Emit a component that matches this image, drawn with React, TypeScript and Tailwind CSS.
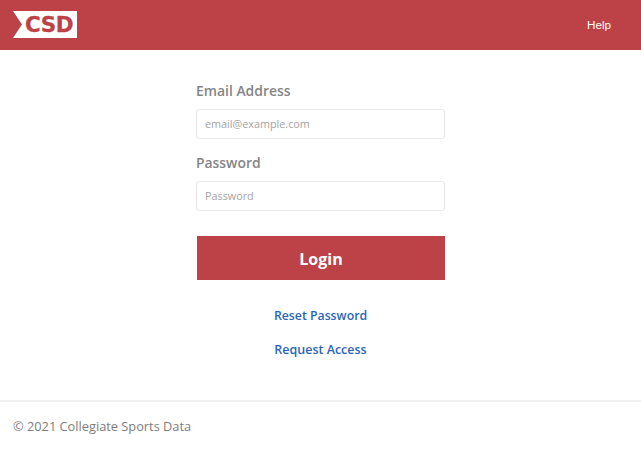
import React from 'react';

const font = "[font-family:'Open_Sans',sans-serif]";

export default function App() {
  return (
    <div className={`w-[641px] h-[450px] flex flex-col bg-white overflow-hidden ${font}`}>
      <header className="h-[50px] shrink-0 bg-[#bd4247] flex items-center justify-between pl-[13px] pr-[30px]">
        <div className="w-[64px] h-[27px] mb-[1px] bg-white [clip-path:polygon(0_0,100%_0,100%_100%,0_100%,14%_50%)] flex items-center justify-end pr-[4px]">
          <span className="font-['DejaVu_Sans'] font-bold text-[21.5px] leading-none tracking-[-0.5px] text-[#bd4247] [-webkit-text-stroke:0.3px_#bd4247]">CSD</span>
        </div>
        <a className="font-['Liberation_Sans'] text-[11.7px] text-white">Help</a>
      </header>

      <main className="flex-1 flex flex-col items-center">
        <form className="w-[249px] pt-[31px] flex flex-col">
          <label className="text-[13.9px] leading-[20px] font-semibold text-[#858585]">Email Address</label>
          <input
            className="mt-[8px] h-[30px] w-full px-[8px] pb-[2px] text-[10.8px] border border-[#e8e8e8] rounded-[3px] outline-none placeholder:text-[#a3a3a3]"
            placeholder="email@example.com"
          />
          <label className="mt-[14px] text-[13.9px] leading-[20px] font-semibold text-[#858585]">Password</label>
          <input
            className="mt-[8px] h-[30px] w-full px-[8px] pb-[2px] text-[10.8px] border border-[#e8e8e8] rounded-[3px] outline-none placeholder:text-[#a3a3a3]"
            placeholder="Password"
            type="password"
          />
          <button type="button" className="mt-[25px] h-[44px] w-[248px] ml-[1px] pt-[2px] bg-[#bd4247] text-white font-bold text-[16px]">
            Login
          </button>
          <div className="mt-[26px] flex flex-col items-center gap-[14px]">
            <a className="text-[12.3px] leading-[20px] font-semibold text-[#2a66b8]">Reset Password</a>
            <a className="text-[12.5px] leading-[20px] font-semibold text-[#2a66b8]">Request Access</a>
          </div>
        </form>
      </main>

      <footer className="h-[50px] shrink-0 border-t-2 border-[#f2f2f2] flex items-center pl-[13px] pt-[2px]">
        <span className="text-[12.8px] text-[#7d7d7d]">© 2021 Collegiate Sports Data</span>
      </footer>
    </div>
  );
}
